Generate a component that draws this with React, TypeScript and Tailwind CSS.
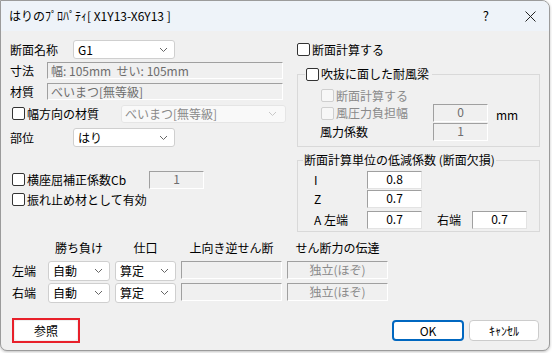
import React from "react";

function Chevron({ light }: { light?: boolean }) {
  return (
    <svg width="9" height="6" viewBox="0 0 9 6" className="shrink-0">
      <polyline
        points="1,1 4.5,4.5 8,1"
        fill="none"
        stroke={light ? "#c8c8c8" : "#666"}
        strokeWidth="1"
      />
    </svg>
  );
}

function Check({ disabled }: { disabled?: boolean }) {
  return (
    <span
      className={
        disabled
          ? "inline-block h-[13px] w-[13px] shrink-0 rounded-[2px] border border-[#cfcfcf] bg-[#f7f7f7]"
          : "inline-block h-[13px] w-[13px] shrink-0 rounded-[2px] border border-[#333] bg-white"
      }
    />
  );
}

function Select({ value, className }: { value: string; className: string }) {
  return (
    <div
      className={`flex items-center justify-between rounded-[3px] border border-[#cfcfcf] bg-white pr-[6px] pl-[4px] ${className}`}
    >
      <span>{value}</span>
      <Chevron />
    </div>
  );
}

// sunken read-only field
function Field({ value, className }: { value: string; className: string }) {
  return (
    <div
      className={`flex items-center border-t border-l border-[#a0a0a0] border-r-white border-b-white border-r border-b bg-[#f0f0f0] ${className}`}
    >
      {value}
    </div>
  );
}

function NumBox({ value, disabled, className }: { value: string; disabled?: boolean; className: string }) {
  return (
    <div
      className={
        disabled
          ? `flex items-start justify-center border-t border-l border-[#a0a0a0] border-r border-b border-r-white border-b-white bg-[#f0f0f0] text-[#6d6d6d] leading-[14px] ${className}`
          : `flex items-start justify-center border-t border-l border-[#a0a0a0] border-r border-b border-r-[#e3e3e3] border-b-[#e3e3e3] bg-white leading-[14px] ${className}`
      }
    >
      {value}
    </div>
  );
}

export default function App() {
  return (
    <div className="h-[353px] w-[552px] bg-white font-[family-name:Noto_Sans_CJK_JP,Noto_Sans,sans-serif] text-[12px] text-black">
      <div className="flex h-[351px] w-[550px] flex-col overflow-hidden rounded-b-[7px] rounded-tr-[8px] border border-[#9b9b9b] bg-[#f0f0f0] shadow-[0_1px_3px_rgba(0,0,0,0.25)]">
        {/* title bar */}
        <div className="flex h-[30px] shrink-0 items-center bg-[#eef3f9] pl-[8px]">
          <span className="text-[12px]">はりのﾌﾟﾛﾊﾟﾃｨ[ X1Y13-X6Y13 ]</span>
          <span className="ml-auto text-[13px]">?</span>
          <span className="mr-[13px] ml-[35px] flex h-[30px] w-[12px] items-center justify-center">
            <svg width="11" height="11" viewBox="0 0 11 11">
              <path d="M0.5 0.5 L10.5 10.5 M10.5 0.5 L0.5 10.5" stroke="#222" strokeWidth="1" />
            </svg>
          </span>
        </div>

        {/* upper area */}
        <div className="flex pt-[9px] leading-[14px]">
          {/* left column */}
          <div className="flex w-[296px] flex-col pl-[9px]">
            <div className="flex h-[19px] items-center">
              <span className="w-[63px]">断面名称</span>
              <Select value="G1" className="h-[19px] w-[102px]" />
            </div>
            <div className="mt-[3px] flex h-[17px] items-center">
              <span className="w-[37px]">寸法</span>
              <Field value="幅: 105mm  せい: 105mm" className="h-[17px] w-[236px] pl-[3px] whitespace-pre text-[#6d6d6d]" />
            </div>
            <div className="mt-[4px] flex h-[17px] items-center">
              <span className="w-[37px]">材質</span>
              <Field value="べいまつ[無等級]" className="h-[17px] w-[236px] pl-[3px] text-[#6d6d6d]" />
            </div>
            <div className="mt-[5px] flex h-[18px] items-center">
              <span className="ml-[2px]">
                <Check />
              </span>
              <span className="ml-[2px] w-[94px]">幅方向の材質</span>
              <div className="flex h-[18px] w-[165px] items-center justify-between rounded-[3px] border border-[#e5e5e5] bg-[#f9f9f9] pr-[8px] pl-[3px] text-[#8a8a8a]">
                <span>べいまつ[無等級]</span>
                <Chevron light />
              </div>
            </div>
            <div className="mt-[5px] flex h-[19px] items-center">
              <span className="w-[63px]">部位</span>
              <Select value="はり" className="h-[19px] w-[102px]" />
            </div>
            <div className="mt-[24px] flex h-[18px] items-center">
              <span className="ml-[2px]">
                <Check />
              </span>
              <span className="ml-[2px] w-[122px]">横座屈補正係数Cb</span>
              <NumBox value="1" disabled className="h-[18px] w-[55px]" />
            </div>
            <div className="mt-[2px] flex h-[18px] items-center">
              <span className="ml-[2px]">
                <Check />
              </span>
              <span className="ml-[2px]">振れ止め材として有効</span>
            </div>
          </div>

          {/* right column */}
          <div className="flex w-[243px] flex-col">
            <div className="flex h-[19px] items-center">
              <Check />
              <span className="ml-[2px]">断面計算する</span>
            </div>
            <fieldset className="mt-[7px] border border-[#d9d9d9] pb-[5px]">
              <legend className="ml-[7px] flex h-[16px] items-center px-[1px]">
                <Check />
                <span className="ml-[2px] pr-[2px]">吹抜に面した耐風梁</span>
              </legend>
              <div className="mt-[5px] flex h-[17px] items-center pl-[23px] text-[#8a8a8a]">
                <Check disabled />
                <span className="ml-[2px]">断面計算する</span>
              </div>
              <div className="flex h-[18px] items-center pl-[23px]">
                <div className="flex w-[112px] items-center text-[#8a8a8a]">
                  <Check disabled />
                  <span className="ml-[2px]">風圧力負担幅</span>
                </div>
                <NumBox value="0" disabled className="h-[18px] w-[55px]" />
                <span className="ml-[8px] pt-[3px]">mm</span>
              </div>
              <div className="mt-[1px] flex h-[18px] items-center pl-[22px]">
                <span className="w-[113px]">風力係数</span>
                <NumBox value="1" disabled className="h-[18px] w-[55px]" />
              </div>
            </fieldset>
            <fieldset className="mt-[6px] border border-[#d9d9d9] pb-[2px]">
              <legend className="ml-[5px] h-[14px] px-[1px] leading-[14px]">断面計算単位の低減係数 (断面欠損)</legend>
              <div className="mt-[4px] flex h-[18px] items-center pl-[16px]">
                <span className="w-[53px]">I</span>
                <NumBox value="0.8" className="h-[18px] w-[55px]" />
              </div>
              <div className="mt-[1px] flex h-[18px] items-center pl-[16px]">
                <span className="w-[53px]">Z</span>
                <NumBox value="0.7" className="h-[18px] w-[55px]" />
              </div>
              <div className="mt-[3px] flex h-[18px] items-center pl-[16px]">
                <span className="w-[53px]">A 左端</span>
                <NumBox value="0.7" className="h-[18px] w-[55px]" />
                <span className="ml-[15px] w-[35px]">右端</span>
                <NumBox value="0.7" className="h-[18px] w-[55px]" />
              </div>
            </fieldset>
          </div>
        </div>

        {/* joint table */}
        <div className="mt-[9px] grid grid-cols-[31px_62px_61px_101px_101px] gap-x-[5px] gap-y-[2px] pl-[11px] leading-[14px]">
          <span />
          <span className="text-center">勝ち負け</span>
          <span className="text-center">仕口</span>
          <span className="text-center">上向き逆せん断</span>
          <span className="text-center">せん断力の伝達</span>

          <span className="mt-[4px] flex h-[19px] items-center">左端</span>
          <Select value="自動" className="mt-[4px] h-[20px]" />
          <Select value="算定" className="mt-[4px] h-[20px]" />
          <Field value="" className="mt-[4px] h-[18px]" />
          <Field value="独立(ほぞ)" className="mt-[4px] h-[18px] justify-center text-[#8a8a8a]" />

          <span className="flex h-[19px] items-center">右端</span>
          <Select value="自動" className="h-[20px]" />
          <Select value="算定" className="h-[20px]" />
          <Field value="" className="h-[18px]" />
          <Field value="独立(ほぞ)" className="h-[18px] justify-center text-[#8a8a8a]" />
        </div>

        {/* buttons */}
        <div className="mt-[15px] flex items-center pr-[10px] pl-[11px]">
          <div className="border-2 border-[#e8202a] p-px">
            <button className="flex h-[19px] w-[62px] items-center justify-center rounded-[2px] bg-white">参照</button>
          </div>
          <button className="ml-auto flex h-[21px] w-[72px] items-center justify-center rounded-[4px] border-2 border-[#0067c0] bg-white">
            OK
          </button>
          <button className="ml-[5px] flex h-[21px] w-[70px] items-center justify-center rounded-[4px] border border-[#cccccc] bg-white">
            ｷｬﾝｾﾙ
          </button>
        </div>
      </div>
    </div>
  );
}
